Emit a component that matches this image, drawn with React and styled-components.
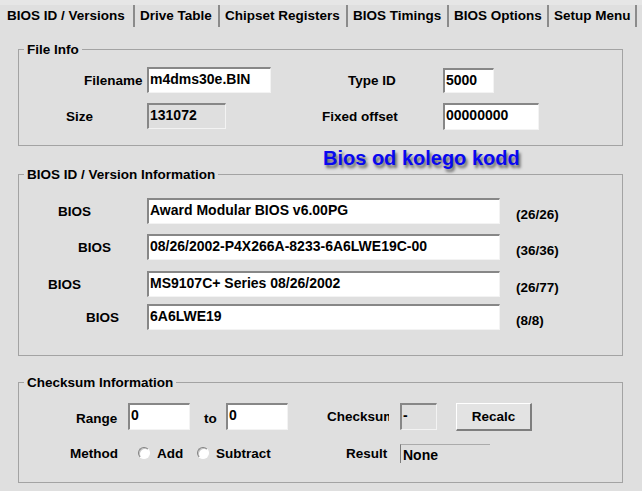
import styled, { createGlobalStyle } from 'styled-components';

const GlobalStyle = createGlobalStyle`
  html, body {
    margin: 0;
    padding: 0;
    background: #dfdfdf;
  }
  body {
    font-family: 'Liberation Sans', Arial, sans-serif;
    font-weight: bold;
    color: #000;
  }
`;

const Window = styled.div`
  width: 642px;
  height: 491px;
  background: #dfdfdf;
  overflow: hidden;
  display: flex;
  flex-direction: column;
`;

const TabBar = styled.div`
  box-sizing: border-box;
  display: flex;
  height: 28px;
  border-top: 5px solid #e6e6e6;
`;

const Tab = styled.div`
  box-sizing: border-box;
  flex: none;
  width: ${(p) => p.$w}px;
  height: 22px;
  padding-left: ${(p) => (p.$active ? 7 : 5)}px;
  border-right: 2px solid #8b8b8b;
  font-size: 13.5px;
  line-height: 22px;
  white-space: nowrap;
`;

const Group = styled.fieldset`
  box-sizing: border-box;
  width: 605px;
  min-width: 0;
  margin: ${(p) => p.$top}px 0 0 18px;
  padding: ${(p) => p.$pad};
  border: 1px solid #a3a3a3;
`;

const Legend = styled.legend`
  margin-left: 5px;
  padding: 0 3px;
  font-size: 13.5px;
  line-height: 15px;
`;

const FileGrid = styled.div`
  display: grid;
  grid-template-columns: 128px 175px 121px 1fr;
  grid-template-rows: 26px 30px;
  row-gap: 8px;
  align-items: center;
`;

const Label = styled.span`
  flex: none;
  box-sizing: border-box;
  width: ${(p) => (p.$w ? `${p.$w}px` : 'auto')};
  margin-left: ${(p) => p.$gap || 0}px;
  padding-left: ${(p) => p.$indent || 0}px;
  padding-top: ${(p) => p.$drop || 0}px;
  font-size: ${(p) => p.$size || 13.5}px;
  white-space: nowrap;
  overflow: hidden;
`;

const TextBox = styled.div`
  flex: none;
  box-sizing: border-box;
  width: ${(p) => p.$w}px;
  height: ${(p) => p.$h || 26}px;
  margin-left: ${(p) => p.$gap || 0}px;
  padding: 2px 2px 0 1px;
  background: ${(p) => (p.$readOnly ? 'transparent' : '#fff')};
  border-style: solid;
  border-width: 2px 1px 1px 2px;
  border-color: #878787 #f3f3f3 #f3f3f3 #878787;
  font-size: 14px;
  line-height: 16px;
  white-space: nowrap;
  overflow: hidden;
`;

const StaticBox = styled.div`
  flex: none;
  box-sizing: border-box;
  width: ${(p) => p.$w}px;
  height: 19px;
  padding: 2px 0 0 2px;
  border-top: 1px solid #ababab;
  border-left: 1px solid #7c7c7c;
  font-size: 14px;
  line-height: 16px;
`;

const Caption = styled.div`
  height: 17px;
  margin-top: 4px;
  padding-left: 323px;
  font-size: 20px;
  line-height: 17px;
  color: #0808f0;
  text-shadow: 2px 3px 3px rgba(0, 0, 0, 0.55);
  white-space: nowrap;
`;

const Row = styled.div`
  display: flex;
  align-items: center;
  height: ${(p) => p.$h}px;
  margin-top: ${(p) => p.$top || 0}px;
`;

const Button = styled.button`
  flex: none;
  box-sizing: border-box;
  width: 76px;
  height: 28px;
  margin-left: 19px;
  padding: 0;
  background: #e3e3e3;
  border-style: solid;
  border-width: 1px 2px 2px 1px;
  border-color: #fff #7e7e7e #7e7e7e #fff;
  font: bold 13.5px 'Liberation Sans', Arial, sans-serif;
  color: #000;
`;

const RadioOption = styled.label`
  flex: none;
  display: flex;
  align-items: center;
  gap: 7px;
  width: ${(p) => p.$w}px;
  font-size: 13.5px;
`;

const RadioDot = styled.span`
  box-sizing: border-box;
  width: 12px;
  height: 12px;
  border-radius: 50%;
  background: #fff;
  border: 1px solid;
  border-color: #808080 #fff #fff #808080;
  box-shadow: inset 1px 1px 0 #c4c4c4;
`;

const tabs = [
  { label: 'BIOS ID / Versions', w: 135, active: true },
  { label: 'Drive Table', w: 85 },
  { label: 'Chipset Registers', w: 128 },
  { label: 'BIOS Timings', w: 101 },
  { label: 'BIOS Options', w: 100 },
  { label: 'Setup Menu', w: 88 },
];

const versions = [
  { indent: 39, top: 0, value: 'Award Modular BIOS v6.00PG', count: '(26/26)' },
  { indent: 59, top: 10, value: '08/26/2002-P4X266A-8233-6A6LWE19C-00', count: '(36/36)' },
  { indent: 29, top: 11, value: 'MS9107C+ Series 08/26/2002', count: '(26/77)' },
  { indent: 67, top: 7, value: '6A6LWE19', count: '(8/8)' },
];

export default function App() {
  return (
    <Window>
      <GlobalStyle />
      <TabBar>
        {tabs.map((t) => (
          <Tab key={t.label} $w={t.w} $active={t.active}>
            {t.label}
          </Tab>
        ))}
      </TabBar>

      <Group $top={14} $pad="10px 0 14px 0">
        <Legend>File Info</Legend>
        <FileGrid>
          <Label $w={125} $indent={65}>Filename</Label>
          <TextBox $w={124}>m4dms30e.BIN</TextBox>
          <Label $indent={26}>Type ID</Label>
          <TextBox $w={51} $h={25}>5000</TextBox>
          <Label $indent={47}>Size</Label>
          <TextBox $w={79} $readOnly>131072</TextBox>
          <Label>Fixed offset</Label>
          <TextBox $w={96} $h={27}>00000000</TextBox>
        </FileGrid>
      </Group>

      <Caption>Bios od kolego kodd</Caption>

      <Group $top={0} $pad="16px 0 25px 0">
        <Legend>BIOS ID / Version Information</Legend>
        {versions.map((v) => (
          <Row key={v.count + v.indent} $h={26} $top={v.top}>
            <Label $w={128} $indent={v.indent}>BIOS</Label>
            <TextBox $w={353}>{v.value}</TextBox>
            <Label $gap={16} $drop={7} $size={13.5}>{v.count}</Label>
          </Row>
        ))}
      </Group>

      <Group $top={19} $pad="12px 0 19px 0">
        <Legend>Checksum Information</Legend>
        <Row $h={29}>
          <Label $w={109} $indent={57} $drop={3}>Range</Label>
          <TextBox $w={62} $h={27}>0</TextBox>
          <Label $w={36} $indent={14} $drop={3}>to</Label>
          <TextBox $w={62} $h={27}>0</TextBox>
          <Label $w={62} $gap={39}>Checksum</Label>
          <TextBox $w={37} $h={27} $gap={11} $readOnly>-</TextBox>
          <Button type="button">Recalc</Button>
        </Row>
        <Row $h={20} $top={12}>
          <Label $w={119} $indent={51} $drop={1}>Method</Label>
          <RadioOption $w={59}>
            <RadioDot />
            Add
          </RadioOption>
          <RadioOption $w={149}>
            <RadioDot />
            Subtract
          </RadioOption>
          <Label $w={54} $drop={1}>Result</Label>
          <StaticBox $w={90}>None</StaticBox>
        </Row>
      </Group>
    </Window>
  );
}
